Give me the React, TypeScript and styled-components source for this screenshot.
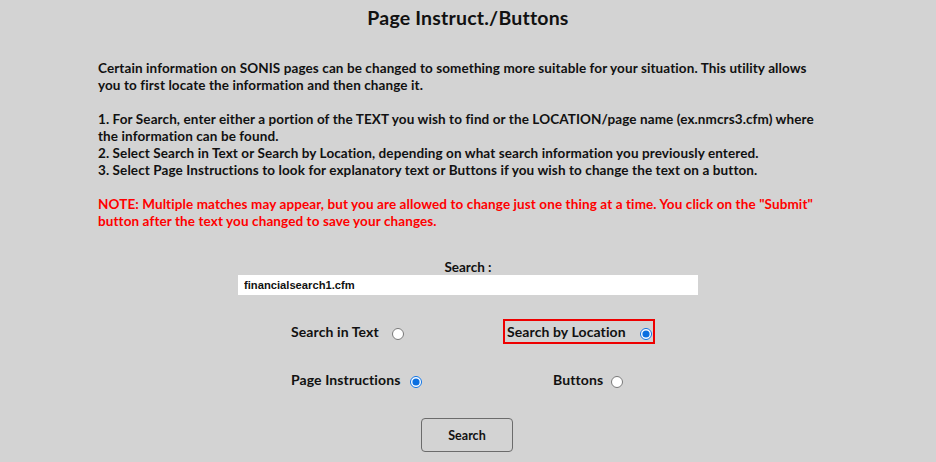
import React from "react";
import styled, { createGlobalStyle } from "styled-components";

const Global = createGlobalStyle`
  html, body { margin: 0; padding: 0; background: #d3d3d3; }
  body { font-family: "Lato", "DejaVu Sans", sans-serif; color: #111; }
`;

const Page = styled.div`
  width: 936px;
  height: 462px;
  overflow: hidden;
  display: flex;
  flex-direction: column;
  align-items: center;
`;

const Title = styled.h1`
  margin: 6px 0 0;
  font-size: 19.5px;
  font-weight: 700;
  line-height: 24px;
  letter-spacing: 0.2px;
`;

const Body = styled.div`
  align-self: flex-start;
  width: 722px;
  margin: 30px 0 0 98px;
  font-size: 13.5px;
  letter-spacing: 0.1px;
  font-weight: 700;
  line-height: 17.3px;
`;

const Para = styled.p<{ $red?: boolean }>`
  margin: 0 0 16px;
  color: ${(p) => (p.$red ? "#ff0000" : "#111")};
`;

const SearchBlock = styled.div`
  display: flex;
  flex-direction: column;
  align-items: center;
  margin-top: 13px;
`;

const Label = styled.div`
  font-size: 13.5px;
  font-weight: 700;
  line-height: 16px;
`;

const TextInput = styled.input`
  width: 460px;
  height: 20px;
  box-sizing: border-box;
  border: none;
  background: #fff;
  padding: 0 6px;
  font-family: "Liberation Sans", Arial, sans-serif;
  font-weight: 700;
  font-size: 11.2px;
  color: #111;
  outline: none;
`;

const OptionGrid = styled.div`
  display: grid;
  grid-template-columns: 216px 160px;
  row-gap: 23px;
  margin: 24px 0 0 14px;
  width: 376px;
`;

const Option = styled.label<{ $boxed?: boolean; $shift?: number }>`
  display: flex;
  align-items: center;
  height: 25px;
  box-sizing: border-box;
  padding: 0 1px 0 2px;
  margin-left: ${(p) => p.$shift ?? 0}px;
  font-size: 14px;
  letter-spacing: 0.1px;
  font-weight: 700;
  border: 2px solid ${(p) => (p.$boxed ? "#ee0000" : "transparent")};
  width: max-content;
`;

const Radio = styled.input<{ $gap: number }>`
  width: 12px;
  height: 12px;
  margin: 4px 0 0 ${(p) => p.$gap}px;
  accent-color: #0b6fe0;
`;

const SubmitButton = styled.button`
  margin: 26px 0 0 -2px;
  width: 92px;
  height: 34px;
  border: 1px solid #6b6b6b;
  border-radius: 4px;
  background: #d3d3d3;
  font-family: "Lato", "DejaVu Sans", sans-serif;
  font-size: 12.5px;
  font-weight: 700;
  color: #111;
`;

export default function App() {
  return (
    <Page>
      <Global />
      <Title>Page Instruct./Buttons</Title>
      <Body>
        <Para>
          Certain information on SONIS pages can be changed to something more suitable for your situation. This utility
          allows you to first locate the information and then change it.
        </Para>
        <Para>
          1. For Search, enter either a portion of the TEXT you wish to find or the LOCATION/page name (ex.nmcrs3.cfm)
          where the information can be found.
          <br />
          2. Select Search in Text or Search by Location, depending on what search information you previously entered.
          <br />
          3. Select Page Instructions to look for explanatory text or Buttons if you wish to change the text on a button.
        </Para>
        <Para $red>
          NOTE: Multiple matches may appear, but you are allowed to change just one thing at a time. You click on the
          "Submit" button after the text you changed to save your changes.
        </Para>
      </Body>
      <SearchBlock>
        <Label>Search :</Label>
        <TextInput defaultValue="financialsearch1.cfm" />
        <OptionGrid>
          <Option>
            Search in Text
            <Radio type="radio" name="mode" $gap={13} />
          </Option>
          <Option $boxed>
            Search by Location
            <Radio type="radio" name="mode" defaultChecked $gap={14} />
          </Option>
          <Option>
            Page Instructions
            <Radio type="radio" name="kind" defaultChecked $gap={10} />
          </Option>
          <Option $shift={46}>
            Buttons
            <Radio type="radio" name="kind" $gap={8} />
          </Option>
        </OptionGrid>
        <SubmitButton>Search</SubmitButton>
      </SearchBlock>
    </Page>
  );
}
